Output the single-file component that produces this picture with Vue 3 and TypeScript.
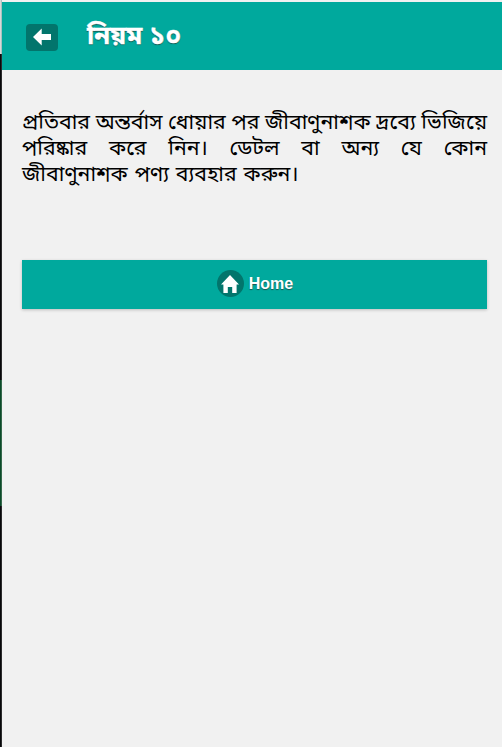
<script setup lang="ts">
interface Line {
  text: string
  fill: boolean
}

const title: string = 'নিয়ম ১০'
const lines: Line[] = [
  { text: 'প্রতিবার অন্তর্বাস ধোয়ার পর জীবাণুনাশক দ্রব্যে ভিজিয়ে', fill: true },
  { text: 'পরিষ্কার করে নিন। ডেটল বা অন্য যে কোন', fill: true },
  { text: 'জীবাণুনাশক পণ্য ব্যবহার করুন।', fill: false },
]
</script>

<template>
  <div class="frame">
    <div class="edge">
      <span class="edge-light"></span>
      <span class="edge-dark"></span>
      <span class="edge-green"></span>
      <span class="edge-rest"></span>
    </div>
    <main class="page">
      <header class="bar">
        <button class="back" aria-label="Back">
          <svg width="18" height="18" viewBox="0 0 18 18">
            <path d="M0 9 8.7 0.4V6H18v6H8.7v5.6z" fill="#fff" />
          </svg>
        </button>
        <h1 class="title">{{ title }}</h1>
      </header>
      <section class="content">
        <div class="text">
          <p v-for="line in lines" :key="line.text" class="line" :class="{ fill: line.fill }">{{ line.text }}</p>
        </div>
        <button class="home">
          <span class="disc">
            <svg width="18" height="18" viewBox="0 0 18 18">
              <path d="M9 0 0 9.4h2.4V18h4.4v-6h4.4v6h4.4V9.4H18z" fill="#fff" />
            </svg>
          </span>
          <span class="label">Home</span>
        </button>
      </section>
    </main>
  </div>
</template>

<style>
body {
  background: #f1f1f1;
}
</style>

<style scoped>
.frame {
  display: flex;
  height: 747px;
  overflow: hidden;
  font-family: "Liberation Sans", "Noto Sans Bengali", "Noto Sans", sans-serif;
}
.edge {
  display: flex;
  flex-direction: column;
  flex: 0 0 2px;
}
.edge-light {
  height: 54px;
  background: linear-gradient(90deg, #d8d8d8 50%, #a9c2bf 50%);
}
.edge-dark {
  height: 326px;
  background: linear-gradient(90deg, #08080a 50%, #2b2b2d 50%);
}
.edge-green {
  height: 126px;
  background: linear-gradient(90deg, #0b4a29 50%, #35694c 50%);
}
.edge-rest {
  flex: 1;
  background: linear-gradient(90deg, #08080a 50%, #2b2b2d 50%);
}
.page {
  flex: 1;
  min-width: 0;
  padding-top: 2px;
  background: #f1f1f1;
}
.bar {
  display: flex;
  height: 68px;
  box-sizing: border-box;
  padding: 22px 0 0 24px;
  background: #00a99d;
}
button {
  border: 0;
  padding: 0;
  font-family: inherit;
}
.back {
  display: flex;
  align-items: center;
  justify-content: center;
  width: 32px;
  height: 27px;
  padding-bottom: 2px;
  border-radius: 4px;
  background: #02756c;
}
.title {
  margin: -8px 0 0 29px;
  font-size: 25.8px;
  line-height: 38px;
  font-weight: 700;
  color: #fff;
  white-space: nowrap;
  text-shadow: 0 1px 1px #17564f;
  -webkit-text-stroke: 0.3px #fff;
}
.content {
  padding: 39px 15px 0 20px;
}
.text {
  height: 151px;
  font-size: 21.3px;
  color: #000;
}
.line {
  width: 465px;
  height: 26px;
  margin: 0;
  line-height: 26px;
  white-space: nowrap;
  word-spacing: 1px;
}
.fill {
  text-align: justify;
  text-align-last: justify;
  word-spacing: -1px;
}
.home {
  display: flex;
  align-items: center;
  justify-content: center;
  width: 100%;
  height: 49px;
  padding: 0 0 2px 1px;
  background: #00a99d;
  box-shadow: 0 1px 3px rgba(0, 0, 0, 0.22);
}
.disc {
  display: flex;
  align-items: center;
  justify-content: center;
  width: 27px;
  height: 27px;
  border-radius: 50%;
  background: #02756c;
}
.label {
  margin-left: 5px;
  font-size: 16px;
  line-height: 18px;
  font-weight: 700;
  color: #fff;
  text-shadow: 0 1px 1px #17564f;
}
</style>
